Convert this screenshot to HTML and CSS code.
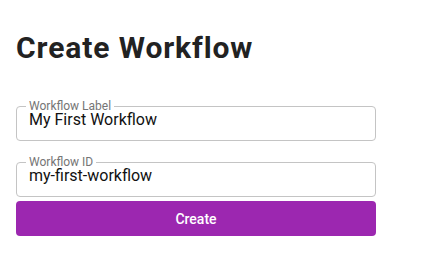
FILE: index.html
```html
<!DOCTYPE html>
<html lang="en">
<head>
    <meta charset="UTF-8">
    <meta name="viewport" content="width=device-width, initial-scale=1.0">
    <title>Create Workflow</title>
    <link rel="stylesheet" href="styles.css">
</head>
<body>

    <div class="container">
        <h1>Create Workflow</h1>

        <form class="workflow-form" onsubmit="return false;">
            <fieldset class="field">
                <legend>Workflow Label</legend>
                <input type="text" id="workflowLabel" value="My First Workflow">
            </fieldset>
            <fieldset class="field">
                <legend>Workflow ID</legend>
                <input type="text" id="workflowId" value="my-first-workflow">
            </fieldset>
            <button type="submit">Create</button>
        </form>
    </div>

</body>
</html>
```

FILE: styles.css
```css
body {
    font-family: Roboto, "Liberation Sans", Arial, sans-serif;
    background-color: #fff;
    color: #222;
    margin: 0;
}
.container {
    width: 360px;
    padding: 0 16px;
}
h1 {
    font-size: 30px;
    font-weight: 700;
    line-height: 36px;
    letter-spacing: 0.9px;
    margin: 30px 0 34px;
    color: #222;
}
.workflow-form {
    display: flex;
    flex-direction: column;
}
.field {
    margin: 0 0 15px;
    padding: 0 12px 11px;
    border: 1px solid #c4c4c4;
    border-radius: 4px;
    min-width: 0;
}
.field legend {
    font-size: 12px;
    line-height: 12px;
    color: #757575;
    padding: 0 3px;
    margin-left: -3px;
}
.field input {
    display: block;
    width: 100%;
    box-sizing: border-box;
    margin-top: -2px;
    padding: 0;
    border: none;
    outline: none;
    font-family: inherit;
    font-size: 16px;
    line-height: 19px;
    color: #111;
    background: transparent;
}
.field:nth-of-type(2) {
    margin-bottom: 4px;
}
button {
    display: block;
    width: 100%;
    height: 35px;
    padding: 0;
    background: #9c27b0;
    color: #fff;
    border: none;
    border-radius: 4px;
    cursor: pointer;
    font-family: inherit;
    font-size: 14px;
    font-weight: 500;
}
button:hover {
    background: #7b1fa2;
}
```
